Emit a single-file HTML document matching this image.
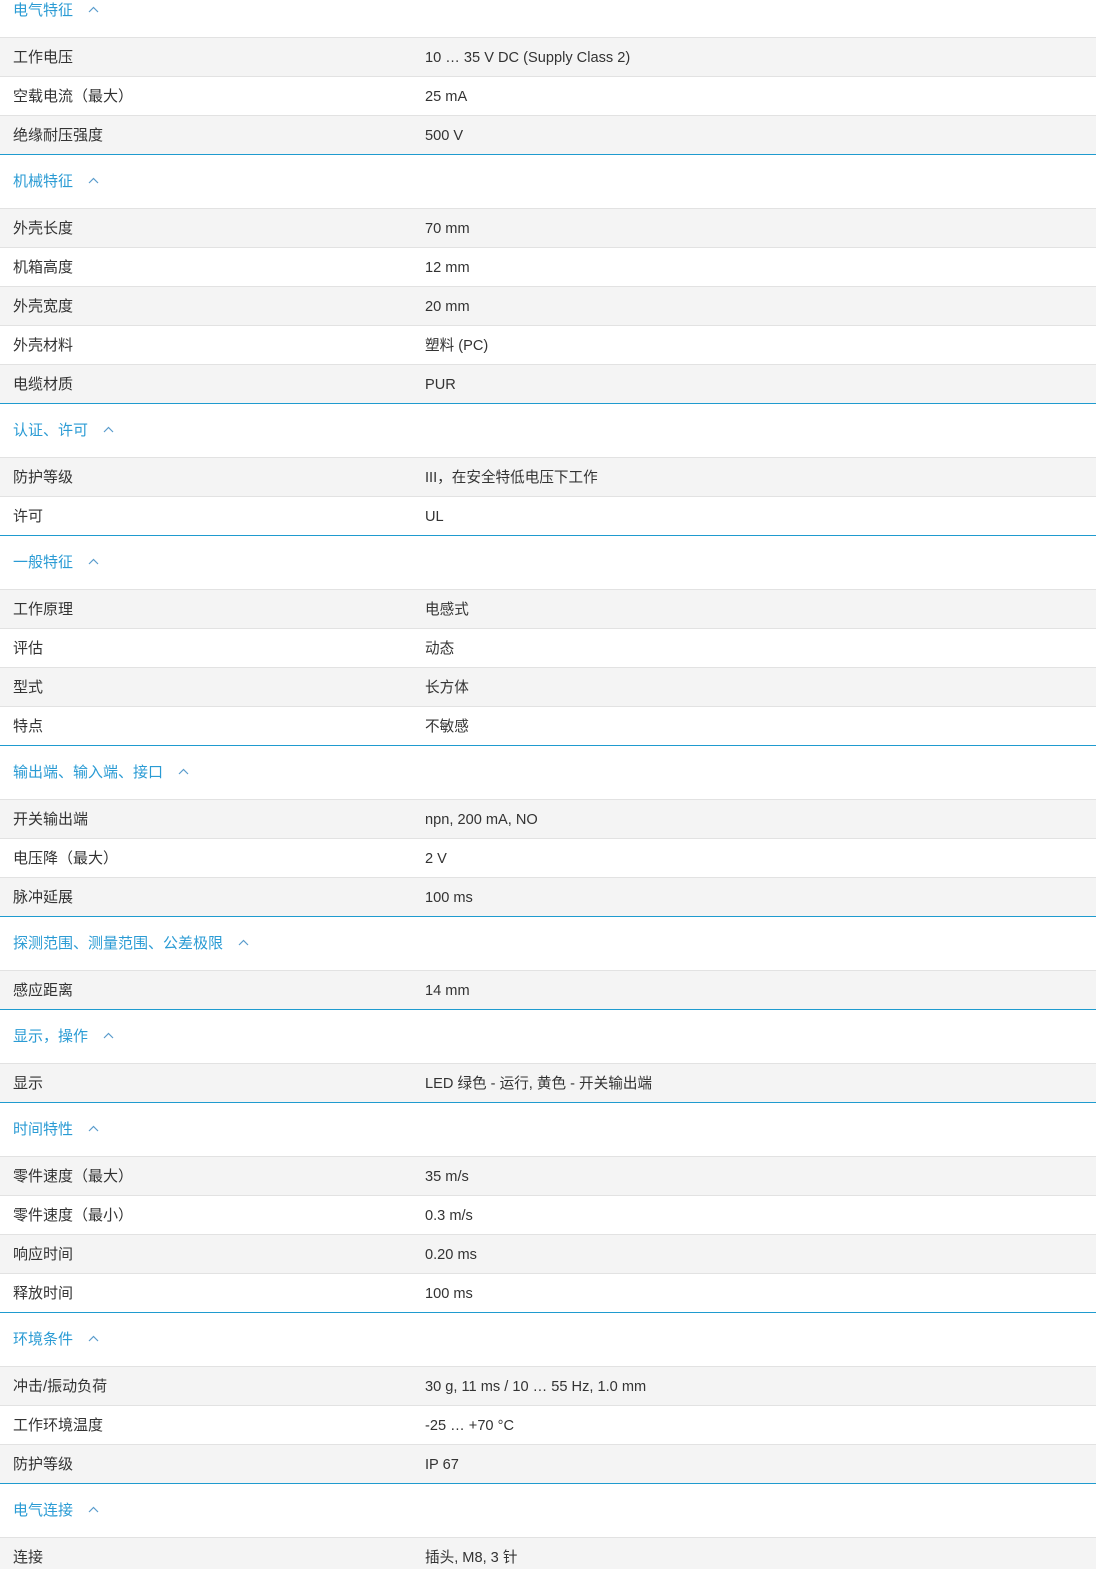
<!DOCTYPE html>
<html><head><meta charset="utf-8"><style>
*{margin:0;padding:0;box-sizing:border-box}
html,body{width:1097px;height:1569px;overflow:hidden;background:#fff}
body{font-family:"Liberation Sans","Noto Sans CJK SC",sans-serif;font-size:15px;color:#333}
.wrap{width:1096px;margin-top:-16px}
.sec{border-bottom:1px solid #1f9bcf}
.h{height:53px;line-height:54px;padding-left:13px;color:#2a9bd4;font-size:15px}
.h svg{margin-left:15px;vertical-align:middle;position:relative;top:-2px}
.r{height:39px;border-top:1px solid #e2e2e2;display:flex;align-items:baseline;padding-top:10px}
.r:nth-of-type(even){background:#f4f4f4}
.r span{display:block;line-height:20px}
.r span:first-child{width:425px;padding-left:13px}
.r span:last-child{font-size:14.6px}
</style></head><body><div class="wrap">
<script>
const d=[
["电气特征",[["工作电压","10 … 35 V DC (Supply Class 2)"],["空载电流（最大）","25 mA"],["绝缘耐压强度","500 V"]]],
["机械特征",[["外壳长度","70 mm"],["机箱高度","12 mm"],["外壳宽度","20 mm"],["外壳材料","塑料 (PC)"],["电缆材质","PUR"]]],
["认证、许可",[["防护等级","III，在安全特低电压下工作"],["许可","UL"]]],
["一般特征",[["工作原理","电感式"],["评估","动态"],["型式","长方体"],["特点","不敏感"]]],
["输出端、输入端、接口",[["开关输出端","npn, 200 mA, NO"],["电压降（最大）","2 V"],["脉冲延展","100 ms"]]],
["探测范围、测量范围、公差极限",[["感应距离","14 mm"]]],
["显示，操作",[["显示","LED 绿色 - 运行, 黄色 - 开关输出端"]]],
["时间特性",[["零件速度（最大）","35 m/s"],["零件速度（最小）","0.3 m/s"],["响应时间","0.20 ms"],["释放时间","100 ms"]]],
["环境条件",[["冲击/振动负荷","30 g, 11 ms / 10 … 55 Hz, 1.0 mm"],["工作环境温度","-25 … +70 °C"],["防护等级","IP 67"]]],
["电气连接",[["连接","插头, M8, 3 针"]]]];
let h="";
for(const [t,rows] of d){h+='<div class="sec"><div class="h">'+t+'<svg width="11" height="7" viewBox="0 0 11 7"><path d="M1 6L5.5 1.5L10 6" fill="none" stroke="#5a9ccc" stroke-width="1.2"/></svg></div>';
for(const [a,b] of rows)h+='<div class="r"><span>'+a+'</span><span>'+b+'</span></div>';h+='</div>';}
document.write(h);
</script>
</div></body></html>
